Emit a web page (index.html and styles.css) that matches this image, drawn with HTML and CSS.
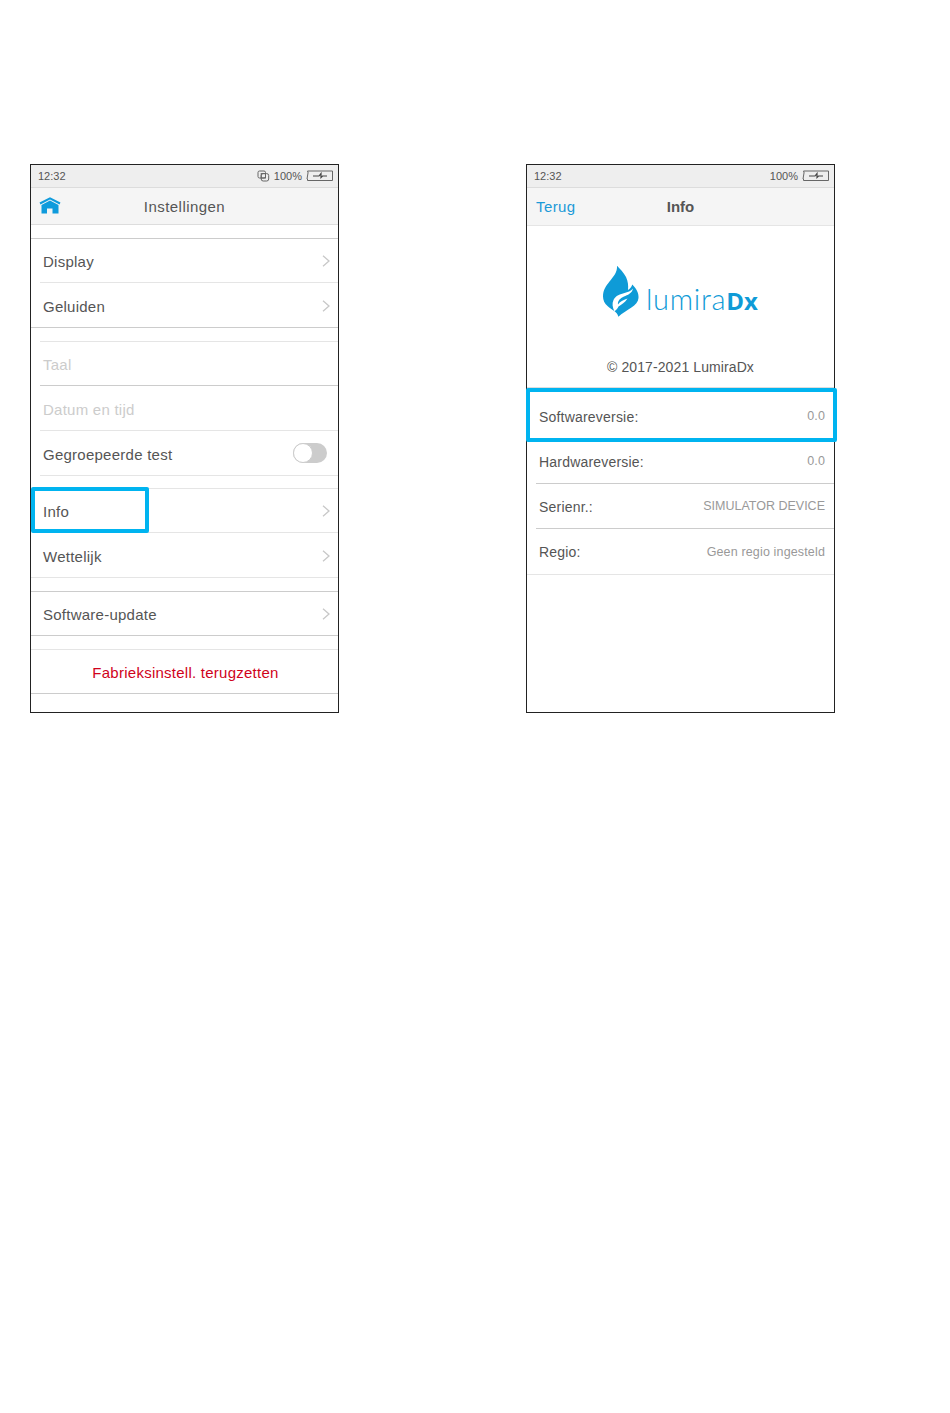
FILE: index.html
```html
<!DOCTYPE html>
<html lang="nl">
<head>
  <meta charset="UTF-8" />
  <title>Instellingen en Info</title>
  <link rel="stylesheet" href="styles.css">
</head>
<body>
  <div class="page">
    <div class="phone">
      <div class="status">
        <span class="time">12:32</span>
        <div class="status-right">
          <svg class="copy-icon" viewBox="0 0 13 12" width="13" height="12">
            <rect x="1" y="1" width="7.5" height="7" rx="1.5" />
            <rect x="4.2" y="3.6" width="7.5" height="7.4" rx="2" />
            <rect x="4.2" y="3.6" width="4.3" height="4.4" />
          </svg>
          <span class="pct">100%</span>
          <svg class="battery" viewBox="0 0 27 11" width="27" height="11">
            <path d="M2 3V1.500H1.500V1H26.500V10.500H1.500V9H1Z" />
            <path class="bolt" d="M7 6H13L15 3.500V7.500L16.500 6H21" />
          </svg>
        </div>
      </div>
      <div class="nav">
        <svg class="home" viewBox="0 0 22 18" width="22" height="18">
          <path class="home-roof" d="M1 6.500L11 1.300L21 6.500" />
          <path class="home-body" d="M2.500 8L11 3.600L19.500 8V16.500H13.500V11.500H8V16.500H2.500Z" />
        </svg>
        <span class="title">Instellingen</span>
      </div>

      <div class="group">
        <div class="row inset">Display<svg class="chev" viewBox="0 0 8 12" width="8" height="12"><path d="M1 .7L7 6L1 11.300" /></svg></div>
        <div class="row end">Geluiden<svg class="chev" viewBox="0 0 8 12" width="8" height="12"><path d="M1 .7L7 6L1 11.300" /></svg></div>
      </div>

      <div class="group group-light inset">
        <div class="row dark muted">Taal</div>
        <div class="row muted">Datum en tijd</div>
        <div class="row">Gegroepeerde test<span class="toggle"><span class="knob"></span></span></div>
      </div>

      <div class="group group-light group-tight">
        <div class="row inset">
          Info<svg class="chev" viewBox="0 0 8 12" width="8" height="12"><path d="M1 .7L7 6L1 11.300" /></svg>
          <div class="mark mark-info"></div>
        </div>
        <div class="row light">Wettelijk<svg class="chev" viewBox="0 0 8 12" width="8" height="12"><path d="M1 .7L7 6L1 11.300" /></svg></div>
      </div>

      <div class="group">
        <div class="row end">Software-update<svg class="chev" viewBox="0 0 8 12" width="8" height="12"><path d="M1 .7L7 6L1 11.300" /></svg></div>
      </div>

      <div class="group group-reset">
        <div class="row end reset">Fabrieksinstell. terugzetten</div>
      </div>
    </div>

    <div class="phone">
      <div class="status status-info">
        <span class="time">12:32</span>
        <div class="status-right">
          <span class="pct">100%</span>
          <svg class="battery" viewBox="0 0 27 11" width="27" height="11">
            <path d="M2 3V1.500H1.500V1H26.500V10.500H1.500V9H1Z" />
            <path class="bolt" d="M7 6H13L15 3.500V7.500L16.500 6H21" />
          </svg>
        </div>
      </div>
      <div class="nav nav-info">
        <span class="back">Terug</span>
        <span class="title title-bold">Info</span>
      </div>

      <div class="about">
        <div class="logo">
          <svg class="flame" viewBox="0 0 36 52" width="36" height="52">
            <path class="flame-fill" d="M14 .7C17 4 20.500 7 23 12C25 16 25.500 21 25 25C27 24 28.500 22 29.300 19.500C33 23 36 28 35.500 33C35 41 24 44 15.300 51.700C14.500 47 9 45 4.500 41C1.500 38.500 0 35 0 31.500C0 25 3 21 6.500 16.500C10.500 11.500 14.500 7 14 .7Z" />
            <path class="flame-cut" d="M30 23.500C29 28.500 24.500 30 21 31.500C17 33.300 14.500 36 15 39.500C17 36.500 20 35 24.500 33.500C22 37.500 18.500 39.500 15.500 41.500C14.500 43.500 13.200 45 11.500 46.500C9.500 42.500 8.800 38.500 10.500 35C12.500 30.500 17.500 29 21.500 28C24.500 27.200 28 26 30 23.500Z" />
          </svg>
          <span class="brand">lumira<b>Dx</b></span>
        </div>
        <div class="copyright">© 2017-2021 LumiraDx</div>
      </div>

      <div class="info-list">
        <div class="info-row info-first">
          <span>Softwareversie:</span><span class="value">0.0</span>
          <div class="mark mark-version"></div>
        </div>
        <div class="info-row"><span>Hardwareversie:</span><span class="value">0.0</span></div>
        <div class="info-row"><span>Serienr.:</span><span class="value value-caps">SIMULATOR DEVICE</span></div>
        <div class="info-row info-last"><span>Regio:</span><span class="value">Geen regio ingesteld</span></div>
      </div>
    </div>
  </div>
</body>
</html>
```

FILE: styles.css
```css
body {
  margin: 0;
  background: #fff;
  font-family: "Liberation Sans", Arial, sans-serif;
  color: #555;
}

.page {
  display: flex;
  gap: 187px;
  padding: 164px 0 700px 30px;
}

.phone {
  width: 309px;
  height: 549px;
  box-sizing: border-box;
  border: 1px solid #222;
}

.status {
  height: 23px;
  box-sizing: border-box;
  border-bottom: 1px solid #dcdcdc;
  background: #eee;
  display: flex;
  align-items: center;
  justify-content: space-between;
  padding: 0 5px 0 7px;
  font-size: 11px;
  color: #555;
}

.status-right {
  display: flex;
  align-items: center;
}

.copy-icon {
  margin-right: 4px;
  fill: none;
  stroke: #666;
  stroke-width: 1;
}

.pct {
  margin-right: 4px;
}

.battery {
  margin-top: -2px;
  fill: none;
  stroke: #666;
  stroke-width: 1;
}

.bolt {
  stroke: #444;
  stroke-width: 1.200;
}

.nav {
  height: 37px;
  box-sizing: border-box;
  border-bottom: 1px solid #ddd;
  background: #f5f5f5;
  display: flex;
  align-items: center;
  justify-content: center;
  position: relative;
}

.nav-info {
  height: 38px;
  border-bottom-color: #e5e5e5;
}

.title {
  font-size: 15px;
  letter-spacing: .45px;
  color: #555;
}

.title-bold {
  font-weight: bold;
  letter-spacing: 0;
}

.home {
  position: absolute;
  left: 8px;
  top: 9px;
}

.home-roof {
  fill: none;
  stroke: #0f9bdc;
  stroke-width: 2;
}

.home-body {
  fill: #0f9bdc;
}

.back {
  position: absolute;
  left: 9px;
  top: 10px;
  font-size: 15px;
  letter-spacing: .4px;
  color: #1b9ad8;
}

.group {
  margin-top: 13px;
  border-top: 1px solid #ccc;
}

.group-light {
  border-top-color: #e5e5e5;
}

.group-light.inset {
  margin-left: 9px;
}

.group-tight {
  margin-top: 12px;
}

.group-reset {
  border-top-color: #e5e5e5;
}

.row {
  height: 45px;
  box-sizing: border-box;
  border-bottom: 1px solid #e5e5e5;
  padding: 3px 8px 0 12px;
  display: flex;
  align-items: center;
  justify-content: space-between;
  position: relative;
  font-size: 15px;
  letter-spacing: .25px;
}

.row:first-child {
  height: 44px;
  padding-top: 2px;
}

.row.inset {
  margin-left: 9px;
  padding-left: 3px;
}

.group-light.inset .row {
  padding-left: 3px;
  padding-right: 11px;
}

.row.end {
  border-bottom-color: #ccc;
}

.row.dark {
  border-bottom-color: #ccc;
}

.row.light {
  border-bottom-color: #e5e5e5;
}

.muted {
  color: #ccc;
}

.row.reset {
  padding: 2px 0 0 2px;
  justify-content: center;
  color: #d0021b;
}

.chev {
  margin-top: -1px;
  fill: none;
  stroke: #c8c8c8;
  stroke-width: 1.300;
}

.toggle {
  width: 34px;
  height: 20px;
  margin-top: -3px;
  border-radius: 10px;
  background: #ccc;
  display: block;
}

.knob {
  width: 20px;
  height: 20px;
  box-sizing: border-box;
  border: 1px solid #ccc;
  border-radius: 50%;
  background: #fff;
  display: block;
}

.mark {
  position: absolute;
  box-sizing: border-box;
  border: 4px solid #00b4f0;
  border-radius: 2px;
}

.mark-info {
  left: -9px;
  top: -2px;
  width: 118px;
  height: 46px;
}

.mark-version {
  left: -1px;
  top: 0;
  width: 311px;
  height: 54px;
}

.about {
  height: 162px;
  box-sizing: border-box;
  border-bottom: 1px solid #ddd;
  display: flex;
  flex-direction: column;
  align-items: center;
}

.logo {
  margin-top: 39px;
  display: flex;
  align-items: flex-end;
  color: #0f9bdc;
}

.flame-fill {
  fill: #0f9bd7;
}

.flame-cut {
  fill: #fff;
}

.brand {
  margin: 0 0 0 7px;
  font-family: Lato, sans-serif;
  font-weight: 300;
  font-size: 29px;
  letter-spacing: .7px;
  line-height: 32px;
  color: #0f9bd7;
}

.brand b {
  font-family: "Open Sans", sans-serif;
  font-weight: 700;
  font-size: 24px;
  letter-spacing: 0;
}

.copyright {
  margin-top: 42px;
  font-size: 14px;
  letter-spacing: .1px;
  color: #555;
}

.info-row {
  height: 45px;
  box-sizing: border-box;
  margin-left: 9px;
  padding: 1px 9px 0 3px;
  border-bottom: 1px solid #ccc;
  display: flex;
  align-items: center;
  justify-content: space-between;
  font-size: 14px;
  letter-spacing: .2px;
}

.info-first {
  height: 51px;
  margin-left: 0;
  padding: 7px 9px 0 12px;
  border-bottom: 1px solid #e5e5e5;
  position: relative;
}

.info-last {
  height: 46px;
  margin-left: 0;
  padding-left: 12px;
  border-bottom-color: #e5e5e5;
}

.value {
  margin-top: -1px;
  font-size: 12.500px;
  letter-spacing: .15px;
  color: #999;
}

.value-caps {
  letter-spacing: 0;
}
```
